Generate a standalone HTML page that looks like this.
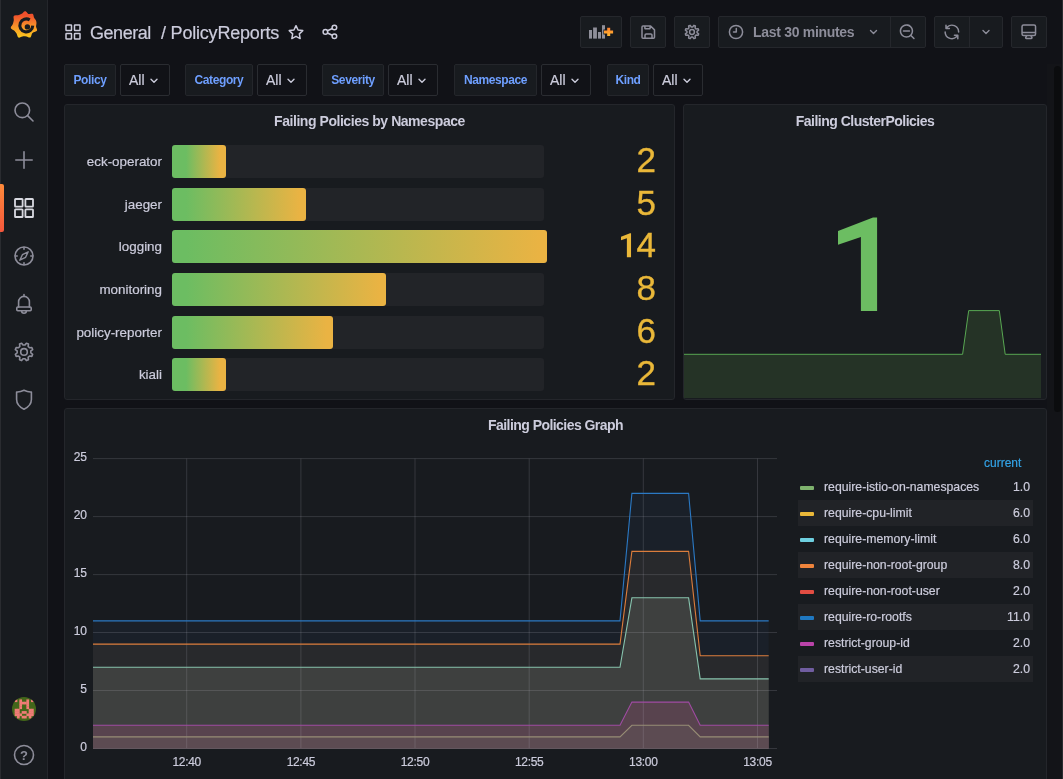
<!DOCTYPE html>
<html><head><meta charset="utf-8"><style>
*{box-sizing:border-box;margin:0;padding:0}
html,body{width:1063px;height:779px;overflow:hidden;background:#111217;}
#root{position:absolute;left:0;top:0;width:1063px;height:779px;will-change:transform;-webkit-text-stroke:0.2px;font-family:"Liberation Sans",sans-serif;color:#ccccdc}
.a{position:absolute}
.ico{stroke:#8d8d9a;fill:none;stroke-width:1.6;stroke-linecap:round;stroke-linejoin:round}
.btn{position:absolute;background:#181b1f;border:1px solid #25272c;border-radius:2px;height:32px;top:16px}
.lbl{position:absolute;-webkit-text-stroke:0;top:64px;height:32px;background:#181b1f;border:1px solid #24262b;border-radius:2px;color:#6e9fff;font-size:12px;font-weight:700;line-height:30px;text-align:center;letter-spacing:-0.4px;white-space:nowrap}
.val{position:absolute;top:64px;height:32px;width:50px;background:#111217;border:1px solid #2a2c31;border-radius:2px;font-size:14px;line-height:30px;padding-left:8px;color:#ccccdc}
.val svg{position:absolute;left:29px;top:13px}
.panel{position:absolute;background:#181b1f;border:1px solid #24262b;border-radius:3px}
.ptitle{position:absolute;-webkit-text-stroke:0;font-size:14px;font-weight:700;letter-spacing:-0.45px;color:#ccccdc;white-space:nowrap;text-align:center;line-height:16px}
.bl{position:absolute;font-size:13.4px;color:#ccccdc;text-align:right;width:120px;left:42px;white-space:nowrap;line-height:16px}
.bgb{position:absolute;left:172px;width:372px;height:33px;background:#222428;border-radius:3px}
.bar{position:absolute;left:172px;height:33px;border-radius:3px}
.num{position:absolute;-webkit-text-stroke:0.35px;font-size:35px;color:#eab839;text-align:right;width:100px;left:556px;line-height:40px}
.lg{position:absolute;left:798px;width:235px;height:26px;font-size:12.25px;line-height:27px;color:#ccccdc}
.lg.alt{background:#212327}
.lg i{position:absolute;left:2px;top:11.7px;width:14px;height:4px;border-radius:1px}
.lg span{position:absolute;left:26px}
.lg b{position:absolute;right:3px;font-weight:400}
.yl{position:absolute;font-size:12px;color:#ccccdc;text-align:right;width:30px;left:57px;line-height:14px}
.xl{position:absolute;font-size:12px;color:#ccccdc;text-align:center;width:60px;top:755px;line-height:14px}
</style></head><body><div id="root">
<div class="a" style="left:0;top:0;width:48px;height:779px;background:#181b1f;border-right:1px solid #24262b"></div>
<svg class="a" style="left:0;top:0" width="48" height="779" viewBox="0 0 48 779">
 <defs><linearGradient id="lgr" gradientUnits="userSpaceOnUse" x1="0" y1="11" x2="0" y2="38"><stop offset="0.15" stop-color="#ef4f2c"/><stop offset="0.55" stop-color="#f7902a"/><stop offset="1" stop-color="#fccc1c"/></linearGradient>
 <linearGradient id="ab" x1="0" y1="0" x2="0" y2="1"><stop offset="0" stop-color="#ff8a3a"/><stop offset="1" stop-color="#f25a2a"/></linearGradient></defs>
 <path fill="url(#lgr)" d="M12.31 25.00 L12.57 24.59 L12.76 24.19 L12.91 23.80 L13.03 23.42 L13.13 23.03 L13.23 22.65 L13.32 22.26 L13.42 21.88 L13.52 21.50 L13.62 21.11 L13.71 20.72 L13.77 20.31 L13.79 19.88 L13.78 19.40 L13.72 18.89 L13.63 18.33 L13.55 17.75 L13.51 17.16 L13.57 16.61 L13.74 16.14 L14.06 15.78 L14.50 15.54 L15.04 15.41 L15.62 15.36 L16.21 15.36 L16.78 15.37 L17.29 15.36 L17.76 15.31 L18.19 15.22 L18.59 15.10 L18.96 14.96 L19.33 14.81 L19.70 14.66 L20.06 14.51 L20.43 14.36 L20.79 14.21 L21.16 14.05 L21.52 13.87 L21.89 13.65 L22.25 13.38 L22.62 13.06 L23.00 12.67 L23.41 12.26 L23.84 11.85 L24.30 11.51 L24.78 11.29 L25.26 11.23 L25.73 11.36 L26.18 11.64 L26.59 12.04 L26.96 12.49 L27.30 12.95 L27.64 13.35 L27.98 13.68 L28.34 13.91 L28.73 14.04 L29.16 14.08 L29.65 14.04 L30.18 13.94 L30.76 13.82 L31.35 13.73 L31.92 13.71 L32.43 13.81 L32.86 14.04 L33.18 14.41 L33.40 14.89 L33.54 15.43 L33.63 15.99 L33.72 16.52 L33.82 17.01 L33.96 17.45 L34.15 17.84 L34.38 18.20 L34.63 18.55 L34.89 18.89 L35.15 19.23 L35.41 19.58 L35.64 19.95 L35.85 20.33 L36.04 20.73 L36.19 21.14 L36.31 21.56 L36.39 21.99 L36.44 22.42 L36.46 22.86 L36.46 23.29 L36.43 23.73 L36.37 24.16 L36.31 24.58 L36.24 25.00 L36.16 25.41 L36.10 25.83 L36.07 26.24 L36.08 26.66 L36.15 27.09 L36.28 27.55 L36.47 28.03 L36.68 28.55 L36.89 29.09 L37.03 29.63 L37.06 30.16 L36.94 30.63 L36.65 31.02 L36.22 31.34 L35.70 31.58 L35.14 31.77 L34.58 31.93 L34.06 32.09 L33.60 32.27 L33.20 32.47 L32.85 32.70 L32.55 32.96 L32.28 33.26 L32.04 33.60 L31.84 33.98 L31.67 34.43 L31.51 34.93 L31.37 35.48 L31.20 36.05 L30.99 36.59 L30.71 37.06 L30.35 37.39 L29.90 37.58 L29.39 37.60 L28.84 37.48 L28.29 37.28 L27.75 37.04 L27.24 36.81 L26.77 36.62 L26.32 36.48 L25.90 36.40 L25.49 36.35 L25.09 36.33 L24.70 36.33 L24.30 36.33 L23.90 36.33 L23.51 36.34 L23.11 36.36 L22.70 36.42 L22.27 36.51 L21.82 36.66 L21.34 36.86 L20.83 37.09 L20.29 37.33 L19.74 37.53 L19.20 37.63 L18.70 37.59 L18.26 37.38 L17.91 37.03 L17.63 36.55 L17.43 36.00 L17.27 35.43 L17.12 34.89 L16.96 34.39 L16.79 33.95 L16.59 33.57 L16.36 33.22 L16.12 32.90 L15.88 32.58 L15.63 32.28 L15.38 31.97 L15.14 31.66 L14.89 31.35 L14.63 31.05 L14.34 30.75 L14.02 30.47 L13.65 30.20 L13.21 29.94 L12.72 29.68 L12.21 29.40 L11.70 29.09 L11.27 28.74 L10.95 28.33 L10.81 27.87 L10.83 27.37 L11.02 26.87 L11.31 26.37 L11.65 25.88 L12.00 25.43 Z"/>
 <path d="M32.75 25.63 A6.45 6.45 0 1 1 29.72 19.93" fill="none" stroke="#181b1f" stroke-width="3.1"/>
 <circle cx="27.4" cy="26.9" r="2.7" fill="#181b1f"/>
 <g class="ico">
  <circle cx="22.3" cy="110.3" r="7.3"/><path d="M27.6 115.6 L33 121"/>
  <path d="M15.8 160 H32.2 M24 151.8 V168.2"/>
  <circle cx="24" cy="256" r="9"/><path d="M24 247.6 v1.6 M24 262.8 v1.6 M15.6 256 h1.6 M30.8 256 h1.6"/>
  <path d="M28.2 251.8 L25.6 257.3 L19.8 260.2 L22.4 254.7 Z" style="stroke-width:1.4"/>
  <path d="M18.6 307 v-5.2 a5.4 5.4 0 0 1 10.8 0 v5.2 M24 294.6 v1.8 M21.6 310.8 a2.4 2.4 0 0 0 4.8 0"/><rect x="16.8" y="307" width="14.4" height="3.8" rx="1"/>
  <path d="M24.97 345.07 L26.37 343.22 L28.46 344.08 L28.14 346.38 L29.52 347.76 L31.82 347.44 L32.68 349.53 L30.83 350.93 L30.83 352.87 L32.68 354.27 L31.82 356.36 L29.52 356.04 L28.14 357.42 L28.46 359.72 L26.37 360.58 L24.97 358.73 L23.03 358.73 L21.63 360.58 L19.54 359.72 L19.86 357.42 L18.48 356.04 L16.18 356.36 L15.32 354.27 L17.17 352.87 L17.17 350.93 L15.32 349.53 L16.18 347.44 L18.48 347.76 L19.86 346.38 L19.54 344.08 L21.63 343.22 L23.03 345.07 Z"/><circle cx="24" cy="351.9" r="3.3"/>
  <path d="M24 390.3 Q28 392.3 31.4 392 V399.5 Q31.4 405.5 24 409.3 Q16.6 405.5 16.6 399.5 V392 Q20 392.3 24 390.3 Z"/>
  <circle cx="24" cy="755" r="9.5"/>
 </g>
 <text x="24" y="760" text-anchor="middle" font-family="Liberation Sans" font-weight="700" font-size="13" fill="#8d8d9a">?</text>
 <g fill="none" stroke="#d8d9e0" stroke-width="1.8">
  <rect x="15" y="199" width="7.6" height="7.6" rx="0.6"/><rect x="25.4" y="199" width="7.6" height="7.6" rx="0.6"/>
  <rect x="15" y="209.4" width="7.6" height="7.6" rx="0.6"/><rect x="25.4" y="209.4" width="7.6" height="7.6" rx="0.6"/>
 </g>
 <clipPath id="avc"><circle cx="24" cy="709" r="12"/></clipPath>
 <circle cx="24" cy="709" r="12" fill="#43661a"/>
 <g clip-path="url(#avc)" fill="#f07c76"><rect x="14.67" y="699.40" width="2.69" height="2.69"/><rect x="19.35" y="699.40" width="2.69" height="2.69"/><rect x="26.37" y="699.40" width="2.69" height="2.69"/><rect x="31.05" y="699.40" width="2.69" height="2.69"/><rect x="19.35" y="701.74" width="2.69" height="2.69"/><rect x="21.69" y="701.74" width="2.69" height="2.69"/><rect x="24.03" y="701.74" width="2.69" height="2.69"/><rect x="26.37" y="701.74" width="2.69" height="2.69"/><rect x="19.35" y="704.08" width="2.69" height="2.69"/><rect x="26.37" y="704.08" width="2.69" height="2.69"/><rect x="19.35" y="706.42" width="2.69" height="2.69"/><rect x="26.37" y="706.42" width="2.69" height="2.69"/><rect x="14.67" y="708.76" width="2.69" height="2.69"/><rect x="17.01" y="708.76" width="2.69" height="2.69"/><rect x="28.71" y="708.76" width="2.69" height="2.69"/><rect x="31.05" y="708.76" width="2.69" height="2.69"/><rect x="14.67" y="711.10" width="2.69" height="2.69"/><rect x="17.01" y="711.10" width="2.69" height="2.69"/><rect x="21.69" y="711.10" width="2.69" height="2.69"/><rect x="24.03" y="711.10" width="2.69" height="2.69"/><rect x="28.71" y="711.10" width="2.69" height="2.69"/><rect x="31.05" y="711.10" width="2.69" height="2.69"/><rect x="14.67" y="713.44" width="2.69" height="2.69"/><rect x="17.01" y="713.44" width="2.69" height="2.69"/><rect x="19.35" y="713.44" width="2.69" height="2.69"/><rect x="26.37" y="713.44" width="2.69" height="2.69"/><rect x="28.71" y="713.44" width="2.69" height="2.69"/><rect x="31.05" y="713.44" width="2.69" height="2.69"/><rect x="17.01" y="715.78" width="2.69" height="2.69"/><rect x="21.69" y="715.78" width="2.69" height="2.69"/><rect x="24.03" y="715.78" width="2.69" height="2.69"/><rect x="28.71" y="715.78" width="2.69" height="2.69"/></g>
</svg>
<svg class="a" style="left:64px;top:23px" width="18" height="18" viewBox="0 0 18 18"><g fill="none" stroke="#ccccdc" stroke-width="1.5">
<rect x="2" y="2" width="5.5" height="5.5" rx="0.5"/><rect x="10.5" y="2" width="5.5" height="5.5" rx="0.5"/><rect x="2" y="10.5" width="5.5" height="5.5" rx="0.5"/><rect x="10.5" y="10.5" width="5.5" height="5.5" rx="0.5"/></g></svg>
<div class="a" style="left:90px;top:23px;font-size:18px;line-height:20px;letter-spacing:-0.45px;color:#ccccdc;white-space:nowrap">General</div>
<div class="a" style="left:161px;top:23px;font-size:18px;line-height:20px;letter-spacing:-0.2px;color:#ccccdc;white-space:nowrap">/ PolicyReports</div>
<svg class="a" style="left:0;top:0" width="400" height="60"><g class="ico" style="stroke:#ccccdc;stroke-width:1.5"><path d="M296.00 25.70 L298.06 29.97 L302.75 30.61 L299.33 33.88 L300.17 38.54 L296.00 36.30 L291.83 38.54 L292.67 33.88 L289.25 30.61 L293.94 29.97 Z"/><circle cx="334.4" cy="27.5" r="2.3"/><circle cx="325.4" cy="31.9" r="2.3"/><circle cx="334.4" cy="36.3" r="2.3"/><path d="M327.5 30.8 L332.3 28.5 M327.5 33 L332.3 35.3"/></g></svg>
<div class="btn" style="left:580px;width:42px"></div>
<div class="btn" style="left:630px;width:36px"></div>
<div class="btn" style="left:674px;width:36px"></div>
<div class="btn" style="left:1011px;width:36px"></div>
<div class="btn" style="left:718px;width:208px"></div><div class="a" style="left:890px;top:17px;width:1px;height:30px;background:#25272c"></div>
<div class="btn" style="left:934px;width:69px"></div><div class="a" style="left:969px;top:17px;width:1px;height:30px;background:#25272c"></div>
<svg class="a" style="left:0;top:0" width="1063" height="60"><g class="ico" style="stroke:#8d8d9a;stroke-width:1.5">
 <path d="M643 26 h7.6 l3.9 3.9 v7.4 a1 1 0 0 1 -1 1 h-10.5 a1 1 0 0 1 -1 -1 v-10.3 a1 1 0 0 1 1 -1 z M644.9 26.2 v2 a0.6 0.6 0 0 0 0.6 0.6 h4 a0.6 0.6 0 0 0 0.6 -0.6 v-2 M645 38.2 v-3 a1.2 1.2 0 0 1 1.2 -1.2 h4.6 a1.2 1.2 0 0 1 1.2 1.2 v3"/>
 <path d="M692.68 26.95 L693.87 25.36 L695.37 25.98 L695.09 27.95 L696.05 28.91 L698.02 28.63 L698.64 30.13 L697.05 31.32 L697.05 32.68 L698.64 33.87 L698.02 35.37 L696.05 35.09 L695.09 36.05 L695.37 38.02 L693.87 38.64 L692.68 37.05 L691.32 37.05 L690.13 38.64 L688.63 38.02 L688.91 36.05 L687.95 35.09 L685.98 35.37 L685.36 33.87 L686.95 32.68 L686.95 31.32 L685.36 30.13 L685.98 28.63 L687.95 28.91 L688.91 27.95 L688.63 25.98 L690.13 25.36 L691.32 26.95 Z"/><circle cx="692" cy="32" r="2.4"/>
 <circle cx="736" cy="32" r="6.6"/><path d="M736.3 28.6 v3.5 h-2.8"/>
 <path d="M870.5 30.5 l3 3 l3 -3" style="stroke-width:1.4"/>
 <path d="M983 30.5 l3 3 l3 -3" style="stroke-width:1.4"/>
 </g>
 <g fill="#8d8d9a">
 <path transform="translate(898.2,22.7) scale(0.75)" d="M21.71,20.29,18,16.61A9,9,0,1,0,16.61,18l3.68,3.68a1,1,0,0,0,1.42,0A1,1,0,0,0,21.71,20.29ZM11,18a7,7,0,1,1,7-7A7,7,0,0,1,11,18Zm4-8H7a1,1,0,0,0,0,2h8a1,1,0,0,0,0-2Z"/>
 <path transform="translate(942.9,22.9) scale(0.75)" d="M19.91,15.51H15.38a1,1,0,0,0,0,2h2.4A8,8,0,0,1,4,12a1,1,0,0,0-2,0,10,10,0,0,0,16.88,7.23V21a1,1,0,0,0,2,0V16.5A1,1,0,0,0,19.91,15.51ZM12,2A10,10,0,0,0,5.12,4.77V3a1,1,0,0,0-2,0V7.5a1,1,0,0,0,1,1h4.5a1,1,0,0,0,0-2H6.22A8,8,0,0,1,20,12a1,1,0,0,0,2,0A10,10,0,0,0,12,2Z"/>
 <path transform="translate(1019.8,22.7) scale(0.75)" d="M19,2H5A3,3,0,0,0,2,5V15a3,3,0,0,0,3,3H7.64l-.58,1a2,2,0,0,0,0,2,2,2,0,0,0,1.75,1h6.46A2,2,0,0,0,17,21a2,2,0,0,0,0-2l-.59-1H19a3,3,0,0,0,3-3V5A3,3,0,0,0,19,2ZM8.77,20,10,18H14l1.2,2ZM20,15a1,1,0,0,1-1,1H5a1,1,0,0,1-1-1V14H20Zm0-3H4V5A1,1,0,0,1,5,4H19a1,1,0,0,1,1,1Z"/>
 </g>
 <g fill="#8f8f9a"><rect x="589" y="30" width="3" height="8.6"/><rect x="593.1" y="27.5" width="3.8" height="11.1"/><rect x="598" y="32" width="3" height="6.6"/><rect x="602" y="25.2" width="3" height="13.4"/></g>
 <path d="M603.4 31.9 h10 M608.7 27.2 v9.2" stroke="#181b1f" stroke-width="5"/>
 <defs><linearGradient id="pg" x1="0" y1="0" x2="0" y2="1"><stop offset="0" stop-color="#ff7f2e"/><stop offset="1" stop-color="#ffb830"/></linearGradient></defs>
 <path d="M604 30.4 h9.1 v3 h-9.1 z M607.2 27.8 h3 v8.1 h-3 z" fill="url(#pg)"/>
</svg>
<div class="a" style="left:753px;top:24px;font-size:14px;font-weight:700;-webkit-text-stroke:0;line-height:16px;letter-spacing:-0.3px;color:#8d8d9a;white-space:nowrap">Last 30 minutes</div>
<div class="lbl" style="left:64px;width:52px">Policy</div>
<div class="val" style="left:120px">All<svg width="8" height="6"><path d="M1 1.2 l3 3 l3 -3" fill="none" stroke="#ccccdc" stroke-width="1.4" stroke-linecap="round" stroke-linejoin="round"/></svg></div>
<div class="lbl" style="left:185px;width:68px">Category</div>
<div class="val" style="left:257px">All<svg width="8" height="6"><path d="M1 1.2 l3 3 l3 -3" fill="none" stroke="#ccccdc" stroke-width="1.4" stroke-linecap="round" stroke-linejoin="round"/></svg></div>
<div class="lbl" style="left:322px;width:62px">Severity</div>
<div class="val" style="left:388px">All<svg width="8" height="6"><path d="M1 1.2 l3 3 l3 -3" fill="none" stroke="#ccccdc" stroke-width="1.4" stroke-linecap="round" stroke-linejoin="round"/></svg></div>
<div class="lbl" style="left:454px;width:83px">Namespace</div>
<div class="val" style="left:541px">All<svg width="8" height="6"><path d="M1 1.2 l3 3 l3 -3" fill="none" stroke="#ccccdc" stroke-width="1.4" stroke-linecap="round" stroke-linejoin="round"/></svg></div>
<div class="lbl" style="left:607px;width:42px">Kind</div>
<div class="val" style="left:653px">All<svg width="8" height="6"><path d="M1 1.2 l3 3 l3 -3" fill="none" stroke="#ccccdc" stroke-width="1.4" stroke-linecap="round" stroke-linejoin="round"/></svg></div>
<div class="panel" style="left:64px;top:104px;width:611px;height:296px"></div>
<div class="ptitle" style="left:64px;top:113px;width:611px">Failing Policies by Namespace</div>
<div class="bl" style="top:154px">eck-operator</div>
<div class="bgb" style="top:145px"></div>
<div class="bar" style="top:145px;width:54px;background:linear-gradient(90deg,#6cbd62 0px,#6cbd62 14px,#eab343 48px,#eab343 100%)"></div>
<div class="num" style="top:140.2px">2</div>
<div class="bl" style="top:197px">jaeger</div>
<div class="bgb" style="top:188px"></div>
<div class="bar" style="top:188px;width:134px;background:linear-gradient(90deg,#6cbd62 0px,#6cbd62 14px,#eab343 128px,#eab343 100%)"></div>
<div class="num" style="top:183.2px">5</div>
<div class="bl" style="top:239px">logging</div>
<div class="bgb" style="top:230px"></div>
<div class="bar" style="top:230px;width:375px;background:linear-gradient(90deg,#6cbd62 0px,#6cbd62 14px,#eab343 369px,#eab343 100%)"></div>
<div class="num" style="top:225.2px">4</div>
<svg class="a" style="left:0;top:0" width="700" height="300"><polygon points="631.04,233.20 629.98,233.20 621.00,236.64 621.00,240.21 626.88,238.23 626.88,257.20 631.04,257.20" fill="#eab839"/></svg>
<div class="bl" style="top:282px">monitoring</div>
<div class="bgb" style="top:273px"></div>
<div class="bar" style="top:273px;width:214px;background:linear-gradient(90deg,#6cbd62 0px,#6cbd62 14px,#eab343 208px,#eab343 100%)"></div>
<div class="num" style="top:268.2px">8</div>
<div class="bl" style="top:325px">policy-reporter</div>
<div class="bgb" style="top:316px"></div>
<div class="bar" style="top:316px;width:161px;background:linear-gradient(90deg,#6cbd62 0px,#6cbd62 14px,#eab343 155px,#eab343 100%)"></div>
<div class="num" style="top:311.2px">6</div>
<div class="bl" style="top:367px">kiali</div>
<div class="bgb" style="top:358px"></div>
<div class="bar" style="top:358px;width:54px;background:linear-gradient(90deg,#6cbd62 0px,#6cbd62 14px,#eab343 48px,#eab343 100%)"></div>
<div class="num" style="top:353.2px">2</div>
<div class="panel" style="left:683px;top:104px;width:364px;height:296px"></div>
<div class="ptitle" style="left:683px;top:113px;width:364px;letter-spacing:-0.5px">Failing ClusterPolicies</div>
<svg class="a" style="left:0;top:0" width="1063" height="400">
<path d="M684 354.3 H962.6 L968.7 310.6 H999.3 L1005.2 354.3 H1041 V398 H684 Z" fill="#253326"/>
<path d="M684 354.3 H962.6 L968.7 310.6 H999.3 L1005.2 354.3 H1041" fill="none" stroke="#58a752" stroke-width="1"/>
<path d="M873 217.5 L877.1 217.5 L877.1 311 L860.9 311 L860.9 237.1 L838 244.8 L838 230.9 Z" fill="#6cbd62"/>
</svg>
<div class="panel" style="left:64px;top:408px;width:983px;height:400px"></div>
<div class="ptitle" style="left:64px;top:417px;width:983px;letter-spacing:-0.55px">Failing Policies Graph</div>
<svg class="a" style="left:0;top:0" width="1063" height="779">
<path d="M93.0 620.9 L620.0 620.9 L631.9 493.4 L688.6 493.4 L700.2 620.9 L768.7 620.9 L768.7 748.5 L93 748.5 Z" fill="#1a2029"/>
<path d="M93.0 644.1 L620.0 644.1 L631.9 551.4 L688.6 551.4 L700.2 655.7 L768.7 655.7 L768.7 748.5 L93 748.5 Z" fill="#28292c"/>
<path d="M93.0 667.3 L620.0 667.3 L631.9 597.8 L688.6 597.8 L700.2 678.9 L768.7 678.9 L768.7 748.5 L93 748.5 Z" fill="#3e403f"/>
<path d="M93.0 725.3 L620.0 725.3 L631.9 702.1 L688.6 702.1 L700.2 725.3 L768.7 725.3 L768.7 748.5 L93 748.5 Z" fill="#58434e"/>
<path d="M93.0 736.9 L620.0 736.9 L631.9 725.3 L688.6 725.3 L700.2 736.9 L768.7 736.9 L768.7 748.5 L93 748.5 Z" fill="#5c4b52"/>
<path d="M93 748.5 H777 M93 690.5 H777 M93 632.5 H777 M93 574.6 H777 M93 516.6 H777 M93 458.6 H777 M186.7 458.6 V748.1 M300.9 458.6 V748.1 M415.0 458.6 V748.1 M529.2 458.6 V748.1 M643.3 458.6 V748.1 M757.5 458.6 V748.1" stroke="rgba(204,204,220,0.16)" stroke-width="1" fill="none"/>
<path d="M93.0 620.9 L620.0 620.9 L631.9 493.4 L688.6 493.4 L700.2 620.9 L768.7 620.9" fill="none" stroke="#2b79c4" stroke-width="1.1"/>
<path d="M93.0 644.1 L620.0 644.1 L631.9 551.4 L688.6 551.4 L700.2 655.7 L768.7 655.7" fill="none" stroke="#dc7d3c" stroke-width="1.1"/>
<path d="M93.0 667.3 L620.0 667.3 L631.9 597.8 L688.6 597.8 L700.2 678.9 L768.7 678.9" fill="none" stroke="#87c3ad" stroke-width="1.1"/>
<path d="M93.0 725.3 L620.0 725.3 L631.9 702.1 L688.6 702.1 L700.2 725.3 L768.7 725.3" fill="none" stroke="#a04ba3" stroke-width="1.1"/>
<path d="M93.0 736.9 L620.0 736.9 L631.9 725.3 L688.6 725.3 L700.2 736.9 L768.7 736.9" fill="none" stroke="#978d75" stroke-width="1.1"/>
</svg>
<div class="yl" style="top:739.8px">0</div>
<div class="yl" style="top:681.8px">5</div>
<div class="yl" style="top:623.8px">10</div>
<div class="yl" style="top:565.9px">15</div>
<div class="yl" style="top:507.9px">20</div>
<div class="yl" style="top:449.9px">25</div>
<div class="xl" style="left:156.7px;letter-spacing:-0.3px">12:40</div>
<div class="xl" style="left:270.9px;letter-spacing:-0.3px">12:45</div>
<div class="xl" style="left:385.0px;letter-spacing:-0.3px">12:50</div>
<div class="xl" style="left:499.2px;letter-spacing:-0.3px">12:55</div>
<div class="xl" style="left:613.3px;letter-spacing:-0.3px">13:00</div>
<div class="xl" style="left:727.5px;letter-spacing:-0.3px">13:05</div>
<div class="a" style="left:984px;top:456px;font-size:12px;line-height:14px;color:#33a2e5">current</div>
<div class="lg" style="top:474px"><i style="background:#7eb26d"></i><span>require-istio-on-namespaces</span><b>1.0</b></div>
<div class="lg alt" style="top:500px"><i style="background:#eab839"></i><span>require-cpu-limit</span><b>6.0</b></div>
<div class="lg" style="top:526px"><i style="background:#6ed0e0"></i><span>require-memory-limit</span><b>6.0</b></div>
<div class="lg alt" style="top:552px"><i style="background:#ef843c"></i><span>require-non-root-group</span><b>8.0</b></div>
<div class="lg" style="top:578px"><i style="background:#e24d42"></i><span>require-non-root-user</span><b>2.0</b></div>
<div class="lg alt" style="top:604px"><i style="background:#1f78c1"></i><span>require-ro-rootfs</span><b>11.0</b></div>
<div class="lg" style="top:630px"><i style="background:#ba43a9"></i><span>restrict-group-id</span><b>2.0</b></div>
<div class="lg alt" style="top:656px"><i style="background:#705da0"></i><span>restrict-user-id</span><b>2.0</b></div>
<div class="a" style="left:0;top:0;width:1px;height:779px;background:#2a2c30"></div><div class="a" style="left:1062px;top:0;width:1px;height:779px;background:#2a2c30"></div><div class="a" style="left:1047px;top:64px;width:15px;height:715px;background:#131418"></div><div class="a" style="left:1054px;top:66px;width:6.5px;height:346px;border-radius:3.5px;background:#0b0c0e"></div><div class="a" style="left:0;top:184px;width:4px;height:48px;border-radius:0 2px 2px 0;background:linear-gradient(180deg,#ff8a3a,#f4573c)"></div>
</div></body></html>
